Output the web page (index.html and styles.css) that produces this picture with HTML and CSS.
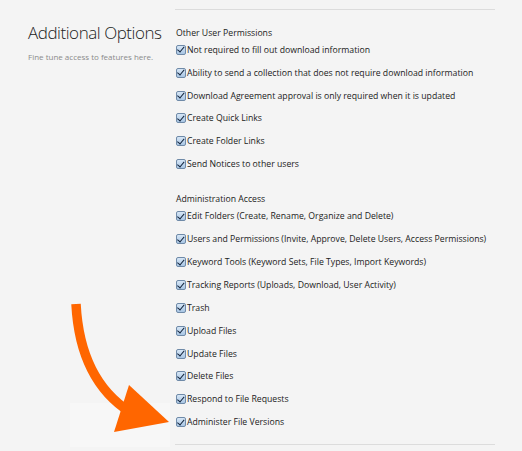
FILE: index.html
```html
<!DOCTYPE html>
<html>
<head>
<meta charset="utf-8">
<link rel="stylesheet" href="styles.css">
</head>
<body>
<div class="page">
  <div class="intro">
    <h1 class="title">Additional Options</h1>
    <p class="subtitle">Fine tune access to features here.</p>
  </div>
  <div class="options">
    <div class="group">
      <div class="group-title">Other User Permissions</div>
      <label class="opt"><span class="cb"></span>Not required to fill out download information</label>
      <label class="opt"><span class="cb"></span>Ability to send a collection that does not require download information</label>
      <label class="opt"><span class="cb"></span>Download Agreement approval is only required when it is updated</label>
      <label class="opt"><span class="cb"></span>Create Quick Links</label>
      <label class="opt"><span class="cb"></span>Create Folder Links</label>
      <label class="opt"><span class="cb"></span>Send Notices to other users</label>
    </div>
    <div class="group">
      <div class="group-title">Administration Access</div>
      <label class="opt"><span class="cb"></span>Edit Folders (Create, Rename, Organize and Delete)</label>
      <label class="opt"><span class="cb"></span>Users and Permissions (Invite, Approve, Delete Users, Access Permissions)</label>
      <label class="opt"><span class="cb"></span>Keyword Tools (Keyword Sets, File Types, Import Keywords)</label>
      <label class="opt"><span class="cb"></span>Tracking Reports (Uploads, Download, User Activity)</label>
      <label class="opt"><span class="cb"></span>Trash</label>
      <label class="opt"><span class="cb"></span>Upload Files</label>
      <label class="opt"><span class="cb"></span>Update Files</label>
      <label class="opt"><span class="cb"></span>Delete Files</label>
      <label class="opt"><span class="cb"></span>Respond to File Requests</label>
      <label class="opt"><span class="cb"></span>Administer File Versions</label>
    </div>
  </div>
</div>
<svg class="arrow" width="180" height="160" viewBox="0 0 180 160">
  <rect x="10" y="113" width="100" height="44" fill="#f7f7f7"/>
  <path d="M16 14 Q20 90 70 122" fill="none" stroke="#ff6600" stroke-width="9.5"/>
  <polygon points="69,95 109,132 54,142" fill="#ff6600"/>
</svg>
</body>
</html>
```
FILE: styles.css
```css
html, body {
  margin: 0;
  padding: 0;
  background: #f4f4f4;
}
body {
  font-family: "Open Sans", "Noto Sans", sans-serif;
  color: #222;
  width: 522px;
  height: 451px;
  overflow: hidden;
  position: relative;
}
.page {
  display: flex;
  padding-left: 28px;
}
.intro {
  width: 147px;
  flex: none;
  padding-top: 20px;
}
.title {
  margin: 0;
  font-size: 17px;
  font-weight: 300;
  line-height: 26px;
  letter-spacing: -0.45px;
  color: #222;
  white-space: nowrap;
}
.subtitle {
  margin: 5px 0 0;
  font-size: 8px;
  color: #8a8a8a;
  white-space: nowrap;
}
.options {
  width: 320px;
  flex: none;
  border-top: 1px solid #dcdcdc;
  border-bottom: 1px solid #dcdcdc;
  margin-top: 9px;
  padding-top: 16.5px;
  padding-bottom: 10px;
}
.group + .group {
  margin-top: 17.5px;
}
.group-title {
  font-size: 8.7px;
  line-height: 12px;
  margin-left: 1px;
  color: #222;
  white-space: nowrap;
}
.opt {
  display: flex;
  align-items: center;
  height: 22.85px;
  font-size: 8.7px;
  color: #222;
  white-space: nowrap;
}
.cb {
  width: 8px;
  height: 8px;
  margin: 0 1px 0 1px;
  border: 1px solid #6f8aa8;
  border-radius: 2px;
  background: linear-gradient(#d6e6f6, #a9c6e4);
  position: relative;
  flex: none;
}
.cb::after {
  content: "";
  position: absolute;
  left: 2px;
  top: -0.5px;
  width: 2.5px;
  height: 5.5px;
  border-right: 1.8px solid #13243c;
  border-bottom: 1.8px solid #13243c;
  transform: rotate(40deg);
}
.arrow {
  position: absolute;
  left: 60px;
  top: 290px;
}
```
